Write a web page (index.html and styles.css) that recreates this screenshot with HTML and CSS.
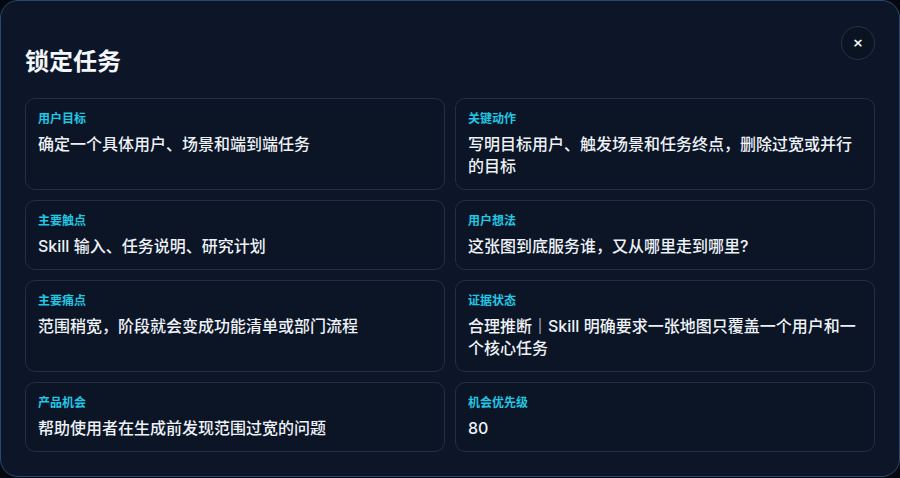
FILE: index.html
```html
<!DOCTYPE html>
<html lang="zh-CN">

<head>
    <meta charset="UTF-8">
    <meta name="viewport" content="width=device-width, initial-scale=1.0">
    <title>锁定任务</title>
    <link rel="stylesheet" href="styles.css">
</head>

<body>

    <div class="modal">
        <button type="button" class="close-button" aria-label="关闭">×</button>
        <h2 class="modal-title">锁定任务</h2>

        <div class="card-grid">
            <div class="card">
                <div class="card-label">用户目标</div>
                <div class="card-text">确定一个具体用户、场景和端到端任务</div>
            </div>
            <div class="card">
                <div class="card-label">关键动作</div>
                <div class="card-text">写明目标用户、触发场景和任务终点，删除过宽或并行的目标</div>
            </div>
            <div class="card">
                <div class="card-label">主要触点</div>
                <div class="card-text">Skill 输入、任务说明、研究计划</div>
            </div>
            <div class="card">
                <div class="card-label">用户想法</div>
                <div class="card-text">这张图到底服务谁，又从哪里走到哪里?</div>
            </div>
            <div class="card">
                <div class="card-label">主要痛点</div>
                <div class="card-text">范围稍宽，阶段就会变成功能清单或部门流程</div>
            </div>
            <div class="card">
                <div class="card-label">证据状态</div>
                <div class="card-text">合理推断｜Skill 明确要求一张地图只覆盖一个用户和一个核心任务</div>
            </div>
            <div class="card">
                <div class="card-label">产品机会</div>
                <div class="card-text">帮助使用者在生成前发现范围过宽的问题</div>
            </div>
            <div class="card">
                <div class="card-label">机会优先级</div>
                <div class="card-text">80</div>
            </div>
        </div>
    </div>

</body>

</html>
```

FILE: styles.css
```css
body {
    margin: 0;
    background-color: #04080f;
    font-family: Inter, "Noto Sans CJK SC", sans-serif;
    color: #e8edf3;
}

.modal {
    position: relative;
    width: 900px;
    box-sizing: border-box;
    padding: 45px 24px 24px;
    background-color: #0c1628;
    border: 1px solid #2b4a6b;
    border-radius: 18px;
}

.close-button {
    position: absolute;
    top: 25px;
    right: 24px;
    width: 34px;
    height: 34px;
    padding: 0;
    border: 1px solid #253345;
    border-radius: 50%;
    background-color: #0a1322;
    color: #ffffff;
    font-family: "DejaVu Sans", sans-serif;
    font-size: 13px;
    font-weight: bold;
    line-height: 32px;
    cursor: pointer;
}

.modal-title {
    margin: 0 0 20px;
    font-size: 24px;
    line-height: 32px;
    font-weight: bold;
    color: #f3f6fa;
}

.card-grid {
    display: grid;
    grid-template-columns: 1fr 1fr;
    gap: 10px;
}

.card {
    padding: 12px 12px;
    background-color: #0b1526;
    border: 1px solid #233042;
    border-radius: 10px;
}

.card-label {
    font-size: 12px;
    line-height: 16px;
    font-weight: bold;
    color: #22c7e4;
    margin-bottom: 6px;
}

.card-text {
    font-size: 16px;
    line-height: 22px;
    font-weight: 500;
    color: #eef2f7;
}
```
